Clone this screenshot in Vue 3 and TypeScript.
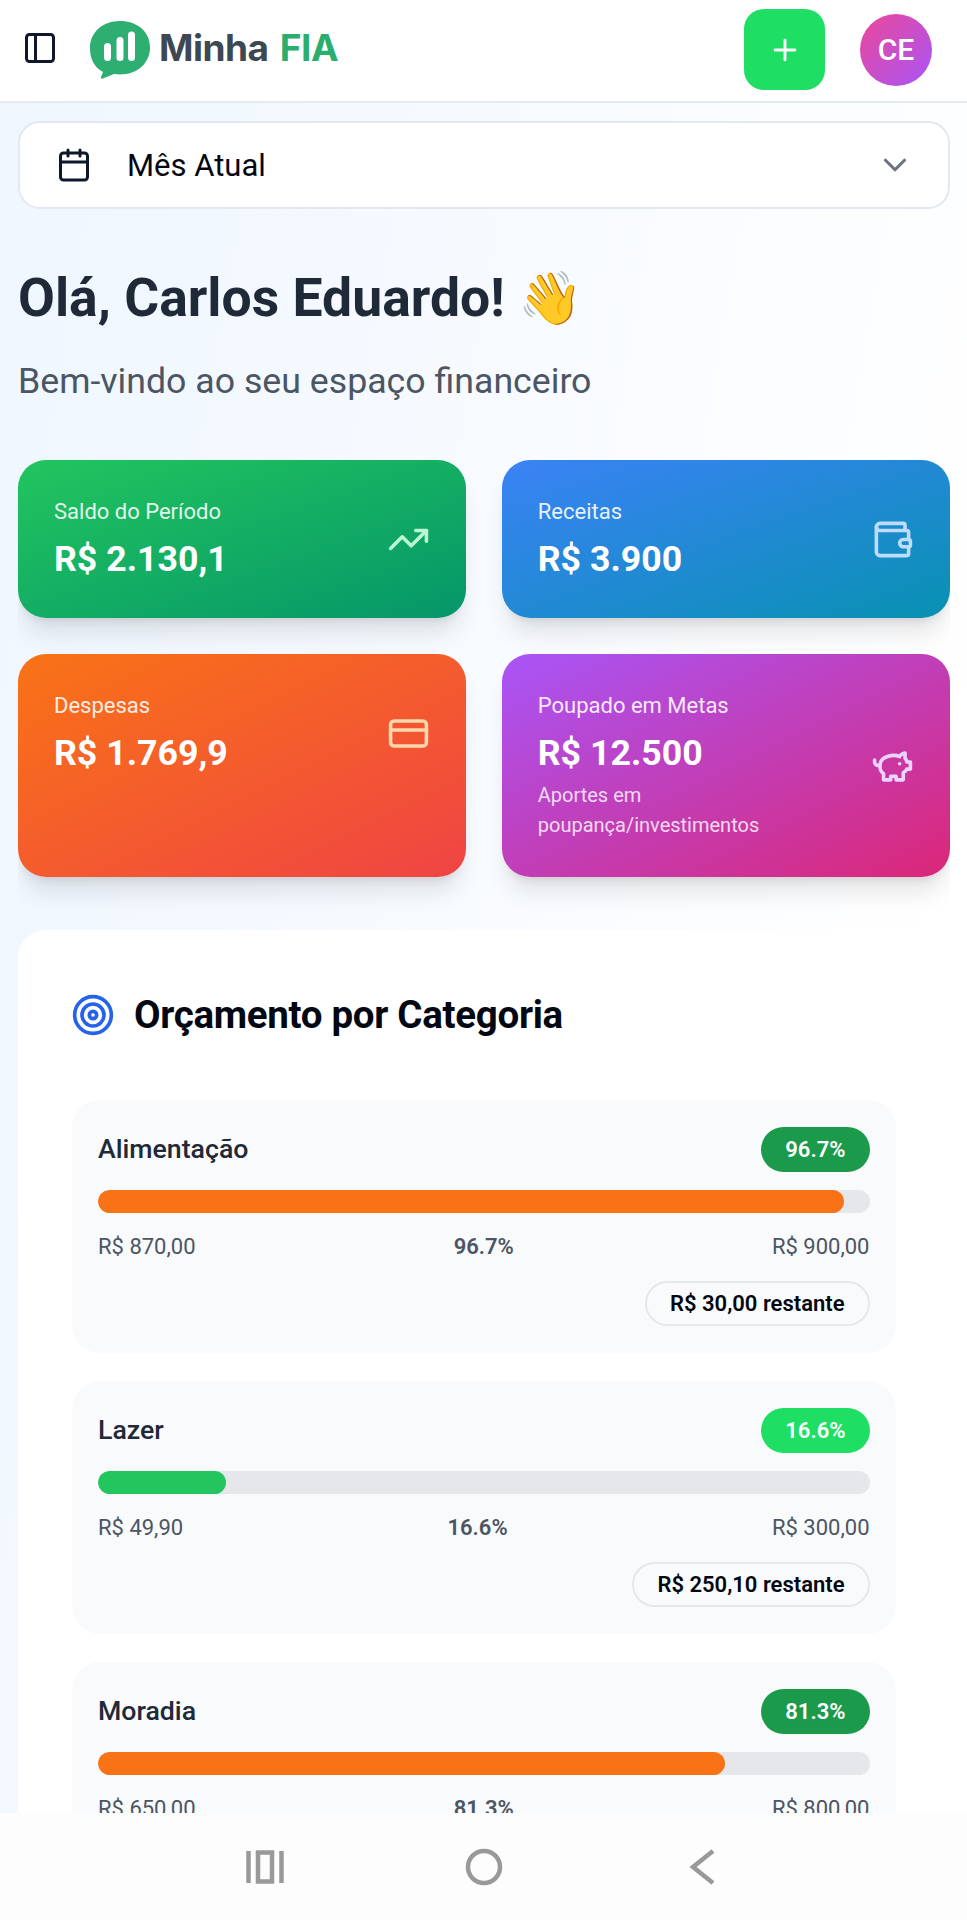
<script setup lang="ts">
interface Stat { cls: string; label: string; value: string; note?: string[]; icon: string }
interface Budget { name: string; pct: number; spent: string; limit: string; left: string; badge: string; bar: string }

const stats: Stat[] = [
  { cls: 'green', label: 'Saldo do Período', value: 'R$ 2.130,1', icon: 'trend' },
  { cls: 'blue', label: 'Receitas', value: 'R$ 3.900', icon: 'wallet' },
  { cls: 'orange', label: 'Despesas', value: 'R$ 1.769,9', icon: 'card' },
  { cls: 'purple', label: 'Poupado em Metas', value: 'R$ 12.500', note: ['Aportes em', 'poupança/investimentos'], icon: 'pig' },
]

const budgets: Budget[] = [
  { name: 'Alimentação', pct: 96.7, spent: 'R$ 870,00', limit: 'R$ 900,00', left: 'R$ 30,00 restante', badge: 'dark', bar: 'warn' },
  { name: 'Lazer', pct: 16.6, spent: 'R$ 49,90', limit: 'R$ 300,00', left: 'R$ 250,10 restante', badge: 'bright', bar: 'ok' },
  { name: 'Moradia', pct: 81.3, spent: 'R$ 650,00', limit: 'R$ 800,00', left: 'R$ 150,00 restante', badge: 'dark', bar: 'warn' },
]
</script>

<template>
  <div class="screen">
    <header class="top">
      <svg class="ico side" viewBox="0 0 24 24"><rect x="3" y="3" width="18" height="18" rx="2" /><path d="M9 3v18" /></svg>
      <svg class="logo" viewBox="0 0 60 58">
        <path class="bubble" d="M30 0C13 0 0 11 0 27c0 11 4 19 13 24l-2 5c-.4 1.400.6 2 1.800 1.400L24 53c2 .3 4 .4 6 .4 17 0 30-11 30-27S47 0 30 0Z" />
        <rect class="bar-w" x="14" y="22" width="7" height="18" rx="3.500" />
        <rect class="bar-w" x="26.500" y="16" width="7" height="24" rx="3.500" />
        <rect class="bar-w" x="38" y="10.500" width="7" height="29.500" rx="3.500" />
      </svg>
      <span class="brand">Minha <b>FIA</b></span>
      <button class="add" type="button">
        <svg class="ico" viewBox="0 0 24 24"><path d="M5 12h14M12 5v14" /></svg>
      </button>
      <div class="avatar">CE</div>
    </header>

    <main class="content">
      <div class="period">
        <svg class="ico cal" viewBox="0 0 24 24"><path d="M8 2v4M16 2v4" /><rect x="3" y="4" width="18" height="18" rx="2" /><path d="M3 10h18" /></svg>
        <span class="period-text">Mês Atual</span>
        <svg class="ico chev" viewBox="0 0 24 24"><path d="m6 9 6 6 6-6" /></svg>
      </div>

      <h1 class="hello">Olá, Carlos Eduardo! <span class="wave">👋</span></h1>
      <p class="welcome">Bem-vindo ao seu espaço financeiro</p>

      <div class="stats-clip">
        <section class="stats">
          <article v-for="s in stats" :key="s.label" class="stat" :class="s.cls">
            <div class="stat-inner">
              <div class="stat-text">
                <div class="stat-label">{{ s.label }}</div>
                <div class="stat-value">{{ s.value }}</div>
                <div v-if="s.note" class="stat-note">
                  <div v-for="n in s.note" :key="n">{{ n }}</div>
                </div>
              </div>
              <svg class="ico stat-icon" viewBox="0 0 24 24">
                <template v-if="s.icon === 'trend'">
                  <path d="M22 7l-8.500 8.500-5-5L2 17" /><path d="M16 7h6v6" />
                </template>
                <template v-else-if="s.icon === 'wallet'">
                  <path d="M19 7V4a1 1 0 0 0-1-1H5a2 2 0 0 0 0 4h15a1 1 0 0 1 1 1v4h-3a2 2 0 0 0 0 4h3a1 1 0 0 0 1-1v-2a1 1 0 0 0-1-1" />
                  <path d="M3 5v14a2 2 0 0 0 2 2h15a1 1 0 0 0 1-1v-4" />
                </template>
                <template v-else-if="s.icon === 'card'">
                  <rect x="2" y="5" width="20" height="14" rx="2" /><path d="M2 10h20" />
                </template>
                <template v-else>
                  <path d="M19 5c-1.500 0-2.800 1.400-3 2-3.500-1.500-11-.3-11 5 0 1.800 0 3 2 4.500V20h4v-2h3v2h4v-4c1-.5 1.700-1 2-2h2v-4h-2c0-1-.5-1.500-1-2V5z" />
                  <path d="M2 9v1c0 1.100.9 2 2 2h1" /><path d="M16 11h.01" />
                </template>
              </svg>
            </div>
          </article>
        </section>
      </div>

      <section class="panel">
        <div class="panel-head">
          <svg class="ico target" viewBox="0 0 24 24"><circle cx="12" cy="12" r="10" /><circle cx="12" cy="12" r="6" /><circle cx="12" cy="12" r="2" /></svg>
          <h2 class="panel-title">Orçamento por Categoria</h2>
        </div>

        <div class="budget-list">
          <div v-for="b in budgets" :key="b.name" class="budget">
            <div class="budget-top">
              <span class="budget-name">{{ b.name }}</span>
              <span class="badge" :class="b.badge">{{ b.pct }}%</span>
            </div>
            <div class="track">
              <div class="fill" :class="b.bar" :style="{ width: b.pct + '%' }"></div>
            </div>
            <div class="amounts">
              <span>{{ b.spent }}</span>
              <span class="mid">{{ b.pct }}%</span>
              <span>{{ b.limit }}</span>
            </div>
            <div class="left-row"><span class="left-pill">{{ b.left }}</span></div>
          </div>
        </div>
      </section>
    </main>

    <nav class="sysnav">
      <svg class="nav-ico" viewBox="0 0 38 36"><path d="M2.500 2v32M35.500 2v32" /><rect x="12" y="3.500" width="14" height="29" /></svg>
      <svg class="nav-ico" viewBox="0 0 38 38"><circle cx="19" cy="19" r="16" /></svg>
      <svg class="nav-ico" viewBox="0 0 38 36"><path d="M29 2 9 18l20 16" /></svg>
    </nav>
  </div>
</template>

<style>
html, body { margin: 0; background: #fff; }
</style>

<style scoped>
* { box-sizing: border-box; }
.screen {
  width: 967px;
  height: 1920px;
  display: flex;
  flex-direction: column;
  overflow: hidden;
  font-family: Roboto, "Liberation Sans", sans-serif;
  background: linear-gradient(100deg, #eff6ff 0%, #ffffff 85%);
}
.ico { fill: none; stroke: currentColor; stroke-width: 2; stroke-linecap: round; stroke-linejoin: round; flex: none; }

.top {
  height: 103px;
  flex: none;
  display: flex;
  align-items: center;
  background: #fff;
  border-bottom: 2px solid #e5eaf1;
  padding: 0 35px 6px 22px;
}
.side { width: 36px; height: 36px; color: #0f172a; }
.logo { width: 60px; height: 58px; margin-left: 32px; margin-top: 4px; flex: none; }
.bubble { fill: #2fae72; }
.bar-w { fill: #fff; }
.brand {
  margin-left: 9px;
  font-family: Inter, sans-serif;
  font-size: 37px;
  font-weight: 700;
  letter-spacing: -0.5px;
  word-spacing: 3px;
  color: #3d4853;
  white-space: nowrap;
}
.brand b { font-weight: 700; color: #2aae6e; }
.add {
  margin-left: auto;
  width: 81px;
  height: 81px;
  border: 0;
  border-radius: 20px;
  background: #1edf64;
  color: #fff;
  display: flex;
  align-items: center;
  justify-content: center;
  padding: 0;
  margin-top: 4px;
}
.add .ico { width: 34px; height: 34px; }
.avatar {
  margin-left: 35px;
  width: 72px;
  height: 72px;
  border-radius: 50%;
  background: linear-gradient(135deg, #ec4899, #a855f7);
  color: #fff;
  font-size: 30px;
  font-weight: 500;
  display: flex;
  align-items: center;
  justify-content: center;
  margin-top: 4px;
}

.content { flex: 1; min-height: 0; overflow: hidden; padding: 18px 17.500px 0 18px; }
.period {
  height: 88px;
  background: #fff;
  border: 2px solid #e3e8f0;
  border-radius: 22px;
  display: flex;
  align-items: center;
  padding: 0 34px 0 36px;
}
.cal { width: 36px; height: 36px; color: #0f172a; }
.period-text { margin-left: 35px; font-size: 31px; color: #030712; }
.chev { width: 38px; height: 38px; margin-left: auto; color: #6b7280; }

.hello { margin: 59px 0 0; font-size: 53.500px; line-height: 60px; font-weight: 700; color: #1f2937; }
.wave { font-size: 52px; }
.welcome { margin: 30px 0 0; font-size: 35.700px; line-height: 44px; color: #4b5563; }

.stats-clip { overflow: hidden; margin-top: 57px; padding-bottom: 53px; }
.stats { display: grid; grid-template-columns: 1fr 1fr; gap: 36px; align-items: stretch; }
.stat {
  border-radius: 28px;
  padding: 36px;
  color: #fff;
  box-shadow: 0 20px 25px -5px rgba(0, 0, 0, 0.1), 0 8px 10px -6px rgba(0, 0, 0, 0.1);
}
.stat-inner { display: flex; align-items: center; justify-content: space-between; }
.stat-label { font-size: 22px; line-height: 32px; opacity: .88; }
.stat-value { font-size: 35.700px; line-height: 44px; font-weight: 700; margin-top: 9px; margin-bottom: 1px; }
.stat-note { font-size: 20px; line-height: 30px; opacity: .8; margin-top: 5px; padding-bottom: 1px; }
.stat-icon { width: 43px; height: 43px; }
.green { background: linear-gradient(to bottom right, #22c55e, #059669); }
.green .stat-icon { color: #bbf7d0; }
.blue { background: linear-gradient(to bottom right, #3b82f6, #0891b2); }
.blue .stat-icon { color: #bfdbfe; }
.orange { background: linear-gradient(to bottom right, #f97316, #ef4444); }
.orange .stat-icon { color: #fed7aa; }
.purple { background: linear-gradient(to bottom right, #a855f7, #db2777); }
.purple .stat-icon { color: #e9d5ff; }

.panel { background: #fff; border-radius: 28px; padding: 60px 54px 40px; }
.panel-head { display: flex; align-items: center; margin-bottom: 60px; height: 50px; }
.target { width: 44px; height: 44px; color: #2563eb; margin-left: -1px; }
.panel-title { margin: 0 0 0 19px; font-size: 38.500px; line-height: 50px; font-weight: 700; letter-spacing: -0.3px; color: #030712; }
.budget-list { display: flex; flex-direction: column; gap: 28px; }
.budget { background: #f9fafb; border-radius: 28px; padding: 27px 26px; }
.budget-top { display: flex; align-items: center; justify-content: space-between; }
.budget-name { font-size: 26.700px; font-weight: 500; color: #1f2937; margin-top: -2px; }
.badge { height: 45px; padding: 0 24px; border-radius: 23px; color: #fff; font-size: 22px; font-weight: 600; display: flex; align-items: center; }
.badge.dark { background: #1b9a4c; }
.badge.bright { background: #1edf64; }
.track { height: 23px; background: #e5e7eb; border-radius: 12px; margin-top: 18px; overflow: hidden; }
.fill { height: 100%; border-radius: 12px; }
.fill.warn { background: #f97316; }
.fill.ok { background: #22c55e; }
.amounts { display: flex; justify-content: space-between; margin-top: 20px; font-size: 22px; line-height: 28px; color: #4b5563; }
.mid { font-weight: 600; }
.left-row { display: flex; justify-content: flex-end; margin-top: 20px; }
.left-pill { height: 45px; padding: 0 23px; border: 2px solid #e5e7eb; border-radius: 23px; font-size: 22px; font-weight: 600; color: #030712; display: flex; align-items: center; background: #f9fafb; }

.sysnav { height: 107px; flex: none; background: #fdfdfd; display: flex; justify-content: center; align-items: center; gap: 181px; padding-top: 0; }
.nav-ico { width: 38px; height: 38px; fill: none; stroke: #999; stroke-width: 4.500; }
</style>
